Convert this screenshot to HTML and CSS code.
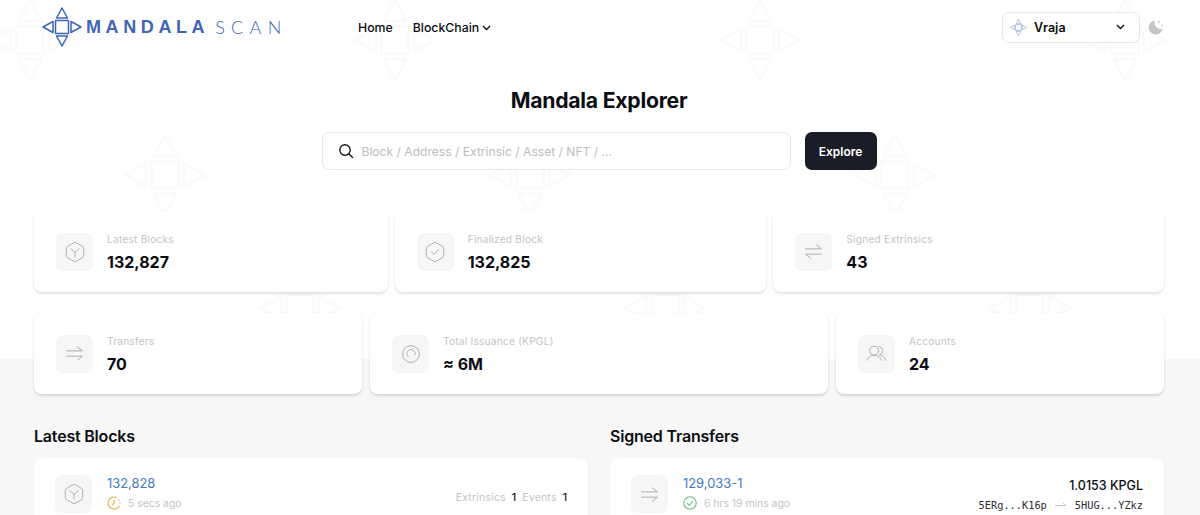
FILE: index.html
```html
<!DOCTYPE html>
<html lang="en">
<head>
    <meta charset="UTF-8">
    <meta name="viewport" content="width=device-width, initial-scale=1.0">
    <title>Mandala Explorer</title>
    <link rel="stylesheet" href="styles.css">
</head>
<body>
    <svg width="0" height="0" class="defs">
        <defs>
            <symbol id="mark" viewBox="0 0 40 40">
                <rect x="13.5" y="13.5" width="13" height="13" fill="none" stroke="currentColor" stroke-width="1.5"/>
                <path d="M20 1 L25.5 11 H14.5 Z M20 39 L25.5 29 H14.5 Z M1 20 L11 14.5 V25.5 Z M39 20 L29 14.5 V25.5 Z" fill="none" stroke="currentColor" stroke-width="1.5" stroke-linejoin="round"/>
            </symbol>
            <symbol id="cube" viewBox="0 0 24 24">
                <path d="M10.6 3.6 a2.8 2.8 0 0 1 2.8 0 L18.6 6.6 a2.8 2.8 0 0 1 1.4 2.4 V15 a2.8 2.8 0 0 1 -1.4 2.4 L13.4 20.4 a2.8 2.8 0 0 1 -2.8 0 L5.4 17.4 a2.8 2.8 0 0 1 -1.4 -2.4 V9 a2.8 2.8 0 0 1 1.4 -2.4 Z M8 9 L12 12.2 L16 9 M12 12.2 V16.5" fill="none" stroke="currentColor" stroke-width="0.85" stroke-linecap="round"/>
            </symbol>
            <symbol id="transfer" viewBox="0 0 24 24">
                <path d="M3 9 H21 L15.5 4.5 M3 15 H21 L15.5 19.5" fill="none" stroke="currentColor" stroke-width="1.1" stroke-linecap="round" stroke-linejoin="round"/>
            </symbol>
        </defs>
    </svg>

    <!-- watermark behind everything -->
    <svg class="watermark" width="1200" height="360">
        <defs>
            <pattern id="tile" width="365" height="400" patternUnits="userSpaceOnUse" x="-12" y="-2">
                <use href="#mark" x="0" y="0" width="84" height="84"/>
                <use href="#mark" x="135" y="135" width="84" height="84"/>
                <use href="#mark" x="270" y="268" width="84" height="84"/>
            </pattern>
        </defs>
        <rect width="1200" height="360" fill="url(#tile)"/>
    </svg>

    <div class="page">
        <header class="topbar">
            <a class="logo" href="#">
                <svg class="logo-mark" width="40" height="40"><use href="#mark"/></svg>
                <span class="logo-name">MANDALA</span><span class="logo-scan">SCAN</span>
            </a>
            <nav class="nav">
                <a href="#">Home</a>
                <a href="#">BlockChain
                    <svg width="9" height="6" viewBox="0 0 9 6"><path d="M1 1 L4.5 4.5 L8 1" fill="none" stroke="currentColor" stroke-width="1.3"/></svg>
                </a>
            </nav>
            <div class="topbar-right">
                <div class="network">
                    <svg class="network-mark" width="17" height="17"><use href="#mark"/></svg>
                    <span>Vraja</span>
                    <svg class="network-arrow" width="9" height="6" viewBox="0 0 9 6"><path d="M1 1 L4.5 4.5 L8 1" fill="none" stroke="currentColor" stroke-width="1.4"/></svg>
                </div>
                <svg class="moon" width="16" height="16" viewBox="0 0 16 16">
                    <path d="M7 1.5 A7 7 0 1 0 14.6 9.5 A6 6 0 0 1 7 1.5 Z" fill="#c4c4c4"/>
                    <path d="M11 1 l.6 1.4 1.4 .6 -1.4 .6 -.6 1.4 -.6 -1.4 -1.4 -.6 1.4 -.6 Z M14 5 l.4 1 1 .4 -1 .4 -.4 1 -.4 -1 -1 -.4 1 -.4 Z" fill="#c4c4c4"/>
                </svg>
            </div>
        </header>

        <section class="hero">
            <h1>Mandala Explorer</h1>
            <form class="search">
                <div class="search-box">
                    <svg width="16" height="16" viewBox="0 0 16 16"><circle cx="7" cy="7" r="5.2" fill="none" stroke="#15181f" stroke-width="1.4"/><path d="M11 11 L14.5 14.5" stroke="#15181f" stroke-width="1.4" stroke-linecap="round"/></svg>
                    <span>Block / Address / Extrinsic / Asset / NFT / ...</span>
                </div>
                <button type="button">Explore</button>
            </form>
        </section>

        <section class="stats stats-top">
            <div class="card stat">
                <div class="icon-box"><svg width="26" height="26"><use href="#cube"/></svg></div>
                <div><div class="stat-label">Latest Blocks</div><div class="stat-value">132,827</div></div>
            </div>
            <div class="card stat">
                <div class="icon-box">
                    <svg width="26" height="26" viewBox="0 0 24 24"><path d="M10.6 3.6 a2.8 2.8 0 0 1 2.8 0 L18.6 6.6 a2.8 2.8 0 0 1 1.4 2.4 V15 a2.8 2.8 0 0 1 -1.4 2.4 L13.4 20.4 a2.8 2.8 0 0 1 -2.8 0 L5.4 17.4 a2.8 2.8 0 0 1 -1.4 -2.4 V9 a2.8 2.8 0 0 1 1.4 -2.4 Z M8.8 12 L11 14.2 L15.2 9.8" fill="none" stroke="currentColor" stroke-width="0.85" stroke-linecap="round" stroke-linejoin="round"/></svg>
                </div>
                <div><div class="stat-label">Finalized Block</div><div class="stat-value">132,825</div></div>
            </div>
            <div class="card stat">
                <div class="icon-box">
                    <svg width="21" height="21" viewBox="0 0 24 24"><path d="M3 9 H21 L15.5 4.5 M21 15 H3 L8.5 19.5" fill="none" stroke="currentColor" stroke-width="1.1" stroke-linecap="round" stroke-linejoin="round"/></svg>
                </div>
                <div><div class="stat-label">Signed Extrinsics</div><div class="stat-value">43</div></div>
            </div>
        </section>

        <section class="stats stats-bottom">
            <div class="card stat">
                <div class="icon-box"><svg width="21" height="21"><use href="#transfer"/></svg></div>
                <div><div class="stat-label">Transfers</div><div class="stat-value">70</div></div>
            </div>
            <div class="card stat">
                <div class="icon-box">
                    <svg width="24" height="24" viewBox="0 0 24 24"><circle cx="12" cy="12" r="8.4" fill="none" stroke="currentColor" stroke-width="0.9"/><path d="M9.2 14.8 A4.2 4.2 0 1 1 16 13" fill="none" stroke="currentColor" stroke-width="0.9" stroke-linecap="round"/></svg>
                </div>
                <div><div class="stat-label">Total Issuance (KPGL)</div><div class="stat-value">≈ 6M</div></div>
            </div>
            <div class="card stat">
                <div class="icon-box">
                    <svg width="23" height="23" viewBox="0 0 24 24"><circle cx="9.5" cy="9" r="4.6" fill="none" stroke="currentColor" stroke-width="1"/><path d="M2 19 C3 15.5 6 14 9.5 14 C13 14 16 15.5 17 19 M14.5 4.5 A4.6 4.6 0 0 1 15 13.5 C18 14 20.5 15.5 22 19" fill="none" stroke="currentColor" stroke-width="1" stroke-linecap="round"/></svg>
                </div>
                <div><div class="stat-label">Accounts</div><div class="stat-value">24</div></div>
            </div>
        </section>

        <section class="lists">
            <div class="list">
                <h2>Latest Blocks</h2>
                <div class="card row">
                    <div class="icon-box"><svg width="26" height="26"><use href="#cube"/></svg></div>
                    <div class="row-main">
                        <a class="row-link" href="#">132,828</a>
                        <div class="row-time">
                            <svg width="14" height="14" viewBox="0 0 13 13"><path d="M9 1.5 A5.6 5.6 0 1 0 11.6 9" fill="none" stroke="#e8b54a" stroke-width="1.1"/><path d="M6.8 3.5 L6.4 7 L4.8 8.4" fill="none" stroke="#e8b54a" stroke-width="1.1"/><circle cx="11" cy="4" r=".7" fill="#e8b54a"/><circle cx="12" cy="6.4" r=".7" fill="#e8b54a"/></svg>
                            <span>5 secs ago</span>
                        </div>
                    </div>
                    <div class="row-counts">
                        <span class="count-label">Extrinsics</span><b>1</b>
                        <span class="count-label">Events</span><b>1</b>
                    </div>
                </div>
            </div>
            <div class="list">
                <h2>Signed Transfers</h2>
                <div class="card row">
                    <div class="icon-box"><svg width="21" height="21"><use href="#transfer"/></svg></div>
                    <div class="row-main">
                        <a class="row-link" href="#">129,033-1</a>
                        <div class="row-time">
                            <svg width="14" height="14" viewBox="0 0 13 13"><circle cx="6.5" cy="6.5" r="5.8" fill="none" stroke="#6dbb82" stroke-width="1"/><path d="M3.8 6.6 L5.8 8.6 L9.2 4.8" fill="none" stroke="#6dbb82" stroke-width="1"/></svg>
                            <span>6 hrs 19 mins ago</span>
                        </div>
                    </div>
                    <div class="row-transfer">
                        <div class="amount">1.0153 KPGL</div>
                        <div class="hashes">
                            <span>5ERg...K16p</span>
                            <svg width="12" height="6" viewBox="0 0 12 6"><path d="M0 3.5 H11 L8 1" fill="none" stroke="#c4c4c4" stroke-width="1"/></svg>
                            <span>5HUG...YZkz</span>
                        </div>
                    </div>
                </div>
            </div>
        </section>
    </div>
</body>
</html>
```

FILE: styles.css
```css
:root {
    --cor-texto: #0b0d12;
    --cor-cinza: #c3c4c8;
    --cor-link: #3f78bd;
    --cor-logo: #3f65b5;
}

html, body {
    height: 515px;
    overflow: hidden;
}

body {
    margin: 0;
    font-family: Inter, 'Liberation Sans', sans-serif;
    color: var(--cor-texto);
    background: #fff;
    position: relative;
}

a {
    color: inherit;
    text-decoration: none;
}

.defs {
    position: absolute;
}

.watermark {
    position: absolute;
    top: 0;
    left: 0;
    color: #fbfbfb;
}

.page {
    position: relative;
    padding: 0 36px 0 34px;
}

/* gray band on the lower half */
.page::before {
    content: "";
    position: absolute;
    z-index: -1;
    left: 0;
    right: 0;
    top: 359px;
    height: 156px;
    background: #f7f7f7;
}

.topbar {
    display: flex;
    align-items: center;
    height: 54px;
}

.logo {
    display: flex;
    align-items: center;
    width: 316px;
    padding-left: 7.5px;
    box-sizing: border-box;
    color: var(--cor-logo);
}

.logo-mark {
    margin-right: 4.5px;
}

.logo-name {
    font-family: 'Liberation Sans', sans-serif;
    font-weight: 700;
    font-size: 18px;
    letter-spacing: 4.6px;
}

.logo-scan {
    font-family: Lato, sans-serif;
    font-weight: 300;
    font-size: 18px;
    letter-spacing: 6.3px;
    margin-left: 6px;
}

.nav {
    display: flex;
    gap: 20px;
    margin-left: 8px;
    font-size: 12.3px;
    font-weight: 500;
}

.nav svg {
    margin-bottom: 1px;
}

.topbar-right {
    margin-left: auto;
    display: flex;
    align-items: center;
    gap: 8px;
}

.network {
    display: flex;
    align-items: center;
    width: 138px;
    height: 31px;
    box-sizing: border-box;
    padding: 0 14px 0 7px;
    background: #fff;
    border: 1px solid #e6e6e8;
    border-radius: 7px;
    font-size: 12.5px;
    font-weight: 600;
}

.network-mark {
    color: #8d9fd8;
    margin-right: 7px;
}

.network-arrow {
    margin-left: auto;
}

.hero {
    display: flex;
    flex-direction: column;
    align-items: center;
}

h1 {
    margin: 32px 0 0;
    height: 28px;
    line-height: 28px;
    font-size: 21.2px;
    font-weight: 700;
    letter-spacing: -0.25px;
}

.search {
    display: flex;
    gap: 14px;
    margin: 18px 0 0;
}

.search-box {
    display: flex;
    align-items: center;
    gap: 8px;
    width: 469px;
    height: 38px;
    box-sizing: border-box;
    padding-left: 15px;
    background: #fff;
    border: 1px solid #e7e7e9;
    border-radius: 7px;
    font-size: 12.1px;
    color: #bcbdc1;
}

.search button {
    width: 72px;
    height: 38px;
    background: #1a1d27;
    border: 0;
    border-radius: 7px;
    color: #fff;
    font-family: inherit;
    font-size: 12px;
    font-weight: 600;
}

.card {
    background: #fff;
    border-radius: 8px;
    box-shadow: 0 2px 3px rgba(0,0,0,0.12), 0 0 2px rgba(0,0,0,0.04);
}

.stats {
    display: grid;
}

.stats-top {
    grid-template-columns: 354fr 372fr 391fr;
    gap: 7px;
    margin-top: 41px;
}

.stats-bottom {
    grid-template-columns: 328fr 458fr 328fr;
    gap: 8px;
    margin-top: 21px;
}

.stat {
    display: flex;
    align-items: center;
    gap: 14px;
    height: 81px;
    box-sizing: border-box;
    padding: 0 22px;
}

.icon-box {
    flex: none;
    width: 37px;
    height: 38px;
    display: flex;
    align-items: center;
    justify-content: center;
    background: #f6f6f6;
    border-radius: 7px;
    color: #a9aaae;
}

.stat-label {
    font-size: 10.2px;
    line-height: 14px;
    letter-spacing: 0.2px;
    color: var(--cor-cinza);
}

.stat-value {
    margin-top: 6px;
    font-size: 16px;
    line-height: 20px;
    font-weight: 700;
}

.lists {
    display: grid;
    grid-template-columns: 554px 554px;
    column-gap: 22px;
    margin-top: 32px;
}

h2 {
    margin: 0 0 11px;
    height: 21px;
    line-height: 21px;
    font-size: 16px;
    font-weight: 600;
    letter-spacing: -0.2px;
}

.row {
    display: flex;
    align-items: center;
    gap: 14px;
    height: 72px;
    box-sizing: border-box;
    padding: 0 21px;
    box-shadow: 0 1px 3px rgba(0,0,0,0.05);
}

.row-main {
    margin-top: -2px;
    margin-left: 1px;
}

.row-link {
    display: block;
    color: var(--cor-link);
    font-size: 12.9px;
    line-height: 16px;
}

.row-time {
    display: flex;
    align-items: center;
    gap: 7px;
    margin-top: 4px;
    font-size: 10.4px;
    line-height: 15px;
    color: var(--cor-cinza);
}

.row-counts {
    margin-left: auto;
    font-size: 10.5px;
    margin-top: 6px;
    display: flex;
    align-items: center;
    gap: 6px;
}

.row-counts b {
    font-weight: 500;
}

.count-label {
    color: var(--cor-cinza);
    letter-spacing: 0.2px;
}

.row-transfer {
    margin-left: auto;
    text-align: right;
    margin-top: 2px;
}

.amount {
    font-size: 12.5px;
    font-weight: 500;
    line-height: 16px;
}

.hashes {
    display: flex;
    align-items: center;
    gap: 8px;
    margin-top: 4px;
    font-family: 'DejaVu Sans Mono', monospace;
    font-size: 10.3px;
    line-height: 14px;
    color: #2c2e33;
}
```
